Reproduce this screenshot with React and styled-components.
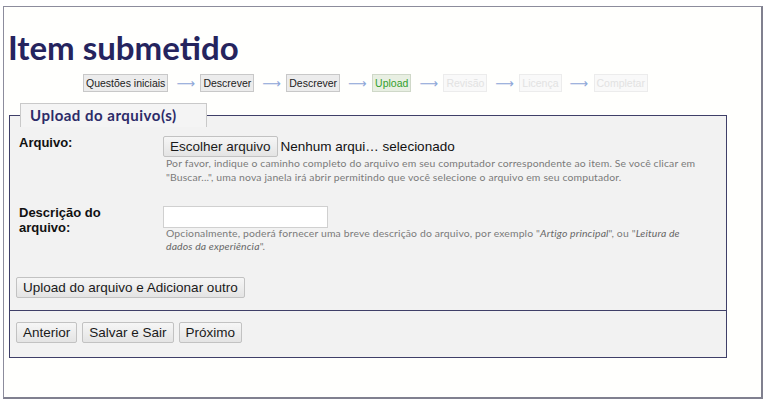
import React from "react";
import styled, { createGlobalStyle } from "styled-components";

const GlobalStyle = createGlobalStyle`
  body {
    margin: 0;
    background: #ffffff;
    font-family: "Liberation Sans", Arial, sans-serif;
  }
`;

const steps = [
  { label: "Questões iniciais", state: "done" },
  { label: "Descrever", state: "done" },
  { label: "Descrever", state: "done" },
  { label: "Upload", state: "current" },
  { label: "Revisão", state: "todo" },
  { label: "Licença", state: "todo" },
  { label: "Completar", state: "todo" },
];

export default function App() {
  return (
    <>
      <GlobalStyle />
      <Frame>
        <Title>Item submetido</Title>
        <Steps>
          {steps.map((s, i) => (
            <React.Fragment key={i}>
              {i > 0 && <Arrow>⟶</Arrow>}
              <Step $state={s.state}>{s.label}</Step>
            </React.Fragment>
          ))}
        </Steps>

        <Panel>
          <Legend>Upload do arquivo(s)</Legend>
          <FieldRow>
            <Label>Arquivo:</Label>
            <Field>
              <FileLine>
                <Button>Escolher arquivo</Button>
                <FileName>Nenhum arqui… selecionado</FileName>
              </FileLine>
              <Help $lh={14}>
                Por favor, indique o caminho completo do arquivo em seu computador correspondente ao item. Se você clicar em
                "Buscar...", uma nova janela irá abrir permitindo que você selecione o arquivo em seu computador.
              </Help>
            </Field>
          </FieldRow>
          <FieldRow $gap={22}>
            <Label>Descrição do arquivo:</Label>
            <Field>
              <TextInput type="text" />
              <Help $lh={13}>
                Opcionalmente, poderá fornecer uma breve descrição do arquivo, por exemplo "<i>Artigo principal</i>", ou "<i>Leitura de
                dados da experiência</i>".
              </Help>
            </Field>
          </FieldRow>
          <UploadRow>
            <Button>Upload do arquivo e Adicionar outro</Button>
          </UploadRow>
        </Panel>

        <Actions>
          <Button>Anterior</Button>
          <Button>Salvar e Sair</Button>
          <Button>Próximo</Button>
        </Actions>
      </Frame>
    </>
  );
}

const Frame = styled.div`
  margin: 6px 7px 0 3px;
  height: 393px;
  box-sizing: border-box;
  background: #fffffd;
  border: 1px solid #8c8c9c;
  border-right: 2px solid #80808f;
  border-bottom: 2px solid #80808f;
  padding: 0 0 0 4px;
  overflow: hidden;
`;

const Title = styled.h1`
  margin: 21px 0 0 0;
  font-family: Lato, "Open Sans", sans-serif;
  font-weight: 700;
  font-size: 33px;
  line-height: 38px;
  color: #25245e;
`;

const Steps = styled.div`
  display: flex;
  align-items: center;
  margin: 8px 0 0 75px;
  gap: 8px;
`;

const stepColors = {
  done: { bg: "#ececec", border: "#c8c8c8", color: "#222" },
  current: { bg: "#e8efe2", border: "#cfd8c8", color: "#33a02c" },
  todo: { bg: "#f9f9f9", border: "#ececec", color: "#e2e2e2" },
};

const Step = styled.span`
  display: inline-block;
  height: 18px;
  line-height: 16px;
  box-sizing: border-box;
  padding: 0 2px;
  font-size: 10.5px;
  background: ${(p) => stepColors[p.$state].bg};
  border: 1px solid ${(p) => stepColors[p.$state].border};
  color: ${(p) => stepColors[p.$state].color};
`;

const Arrow = styled.span`
  font-family: "DejaVu Sans", sans-serif;
  font-size: 13px;
  color: #8ea6d8;
  width: 16px;
  text-align: center;
`;

const Panel = styled.fieldset`
  margin: 11px 0 0 1px;
  width: 718px;
  box-sizing: border-box;
  border: 1px solid #3f3f68;
  background: #f2f2f2;
  padding: 9px 0 12px 9px;
  min-width: 0;
`;

const Legend = styled.legend`
  margin-left: 1px;
  height: 24px;
  box-sizing: border-box;
  padding: 0 29px 0 9px;
  background: #f4f4f4;
  border: 1px solid #c9c9c9;
  border-bottom: none;
  font-family: Lato, "DejaVu Sans", sans-serif;
  font-weight: 700;
  font-size: 15px;
  letter-spacing: 0.5px;
  line-height: 22px;
  color: #2c2b68;
`;

const FieldRow = styled.div`
  display: grid;
  grid-template-columns: 144px 1fr;
  margin-top: ${(p) => p.$gap || 0}px;
`;

const Label = styled.div`
  font-weight: 700;
  font-size: 13px;
  line-height: 15px;
  color: #111;
  margin-top: -1px;
  width: 90px;
`;

const Field = styled.div`
  display: flex;
  flex-direction: column;
`;

const FileLine = styled.div`
  display: flex;
  align-items: center;
  gap: 3px;
`;

const FileName = styled.span`
  font-size: 13.5px;
  color: #111;
`;

const Button = styled.button`
  font-family: "Liberation Sans", Arial, sans-serif;
  font-size: 13.5px;
  color: #1a1a1a;
  height: 21px;
  padding: 0 6px;
  background: linear-gradient(#f6f6f6, #e4e4e4);
  border: 1px solid #c2c2c2;
  border-radius: 2px;
`;

const TextInput = styled.input`
  width: 165px;
  height: 22px;
  box-sizing: border-box;
  border: 1px solid #d0d0d0;
  background: #fff;
  margin: 0;
`;

const Help = styled.p`
  margin: -1px 0 0 3px;
  font-family: Lato, "DejaVu Sans", sans-serif;
  font-size: 10.4px;
  line-height: ${(p) => p.$lh}px;
  color: #7a7a7a;
  width: 536px;
  letter-spacing: 0.15px;
  i {
    color: #666;
  }
`;

const UploadRow = styled.div`
  margin-top: 24px;
  margin-left: -3px;
`;

const Actions = styled.div`
  margin-left: 1px;
  width: 718px;
  box-sizing: border-box;
  height: 47px;
  border: 1px solid #3f3f68;
  border-top: none;
  background: #f2f2f2;
  display: flex;
  gap: 5px;
  padding: 11px 0 0 6px;
  align-items: flex-start;
`;
